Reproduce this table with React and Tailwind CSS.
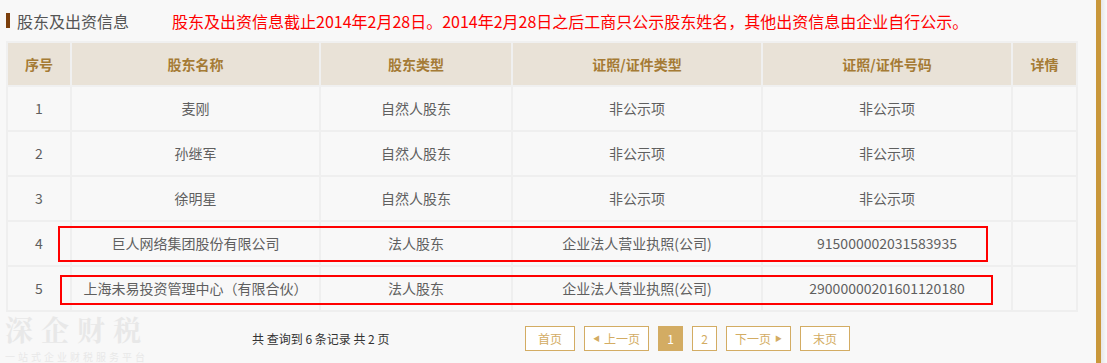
import React from 'react';

const rows = [
    { no: 1, name: '麦刚', type: '自然人股东', certType: '非公示项', certNo: '非公示项' },
    { no: 2, name: '孙继军', type: '自然人股东', certType: '非公示项', certNo: '非公示项' },
    { no: 3, name: '徐明星', type: '自然人股东', certType: '非公示项', certNo: '非公示项' },
    { no: 4, name: '巨人网络集团股份有限公司', type: '法人股东', certType: '企业法人营业执照(公司)', certNo: '915000002031583935' },
    { no: 5, name: '上海未易投资管理中心（有限合伙）', type: '法人股东', certType: '企业法人营业执照(公司)', certNo: '29000000201601120180' },
];

const font = { fontFamily: '"Microsoft YaHei", "Noto Sans CJK SC", "Noto Sans", sans-serif' };

function PageBtn({ children, active, className = '' }) {
    return (
        <div
            className={
                'h-[25px] flex items-center justify-center border border-[#d3ac63] text-[12px] ' +
                (active ? 'bg-[#d3ac63] text-white ' : 'text-[#d3ac63] bg-white ') +
                className
            }
        >
            {children}
        </div>
    );
}

export default function App() {
    return (
        <div className="w-[1107px] h-[363px] bg-[#f8f8f8] flex overflow-hidden" style={font}>
            <div className="w-[1096px] relative">
                {/* title */}
                <div className="h-[41px] flex items-center pl-[6px]">
                    <div className="w-[4px] h-[15px] bg-[#7b3f0c] mr-[7px]" />
                    <span className="text-[16px] text-[#555]">股东及出资信息</span>
                    <span className="text-[16px] text-[#ff0000] ml-[43px]">
                        股东及出资信息截止2014年2月28日。2014年2月28日之后工商只公示股东姓名，其他出资信息由企业自行公示。
                    </span>
                </div>

                {/* table */}
                <div className="relative ml-[6px] w-[1070px]">
                    <table className="w-full border-collapse table-fixed text-[14px]">
                        <colgroup>
                            <col className="w-[64px]" />
                            <col className="w-[249px]" />
                            <col className="w-[192px]" />
                            <col className="w-[250px]" />
                            <col className="w-[250px]" />
                            <col className="w-[65px]" />
                        </colgroup>
                        <thead>
                            <tr className="h-[44px] bg-[#e9e2d7] text-[#a57b35] font-bold">
                                <th className="border-2 border-[#f0f0f0] font-bold">序号</th>
                                <th className="border-2 border-[#f0f0f0] font-bold">股东名称</th>
                                <th className="border-2 border-[#f0f0f0] font-bold">股东类型</th>
                                <th className="border-2 border-[#f0f0f0] font-bold">证照/证件类型</th>
                                <th className="border-2 border-[#f0f0f0] font-bold">证照/证件号码</th>
                                <th className="border-2 border-[#f0f0f0] font-bold">详情</th>
                            </tr>
                        </thead>
                        <tbody className="text-[#5f5f5f]">
                            {rows.map((r) => (
                                <tr key={r.no} className="h-[45px] text-center">
                                    <td className="border-2 border-[#efefef]">{r.no}</td>
                                    <td className="border-2 border-[#efefef]">{r.name}</td>
                                    <td className="border-2 border-[#efefef]">{r.type}</td>
                                    <td className="border-2 border-[#efefef]">{r.certType}</td>
                                    <td className="border-2 border-[#efefef]">{r.certNo}</td>
                                    <td className="border-2 border-[#efefef]"></td>
                                </tr>
                            ))}
                        </tbody>
                    </table>

                    {/* annotation boxes */}
                    <div className="absolute left-[52px] top-[185px] w-[930px] h-[36px] border-2 border-[#ff0000]" />
                    <div className="absolute left-[54px] top-[234px] w-[933px] h-[30px] border-2 border-[#ff0000]" />
                </div>

                {/* pagination */}
                <div className="flex items-center h-[53px] pl-[252px]">
                    <span className="text-[12px] text-[#333] w-[273px] whitespace-pre">共 查询到 6 条记录 共 2 页</span>
                    <div className="flex gap-[9px]">
                        <PageBtn className="w-[50px]">首页</PageBtn>
                        <PageBtn className="w-[65px] gap-[4px]">
                            <span className="text-[7px]">◀</span>上一页
                        </PageBtn>
                        <PageBtn active className="w-[25px]">1</PageBtn>
                        <PageBtn className="w-[25px]">2</PageBtn>
                        <PageBtn className="w-[65px] gap-[4px]">
                            下一页<span className="text-[7px]">▶</span>
                        </PageBtn>
                        <PageBtn className="w-[50px]">末页</PageBtn>
                    </div>
                </div>

                {/* watermark */}
                <div className="absolute left-[5px] top-[315px] text-[#e8e8e8] pointer-events-none">
                    <div className="text-[28px] leading-[28px] font-bold tracking-[8px]" style={{ fontFamily: '"Noto Serif CJK SC", "Noto Sans CJK SC", serif' }}>深企财税</div>
                    <div className="text-[10px] leading-[10px] mt-[9px] tracking-[3px]">一站式企业财税服务平台</div>
                </div>
            </div>
            <div className="w-[5px] bg-[#c9973a]" />
            <div className="flex-1 bg-gradient-to-r from-[#e6e6e6] to-[#fafafa]" />
        </div>
    );
}
